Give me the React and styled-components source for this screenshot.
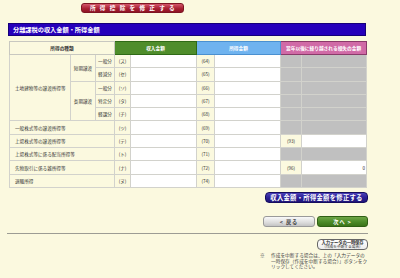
import React from "react";
import styled, { createGlobalStyle } from "styled-components";

const Global = createGlobalStyle`
  html, body { margin: 0; padding: 0; background: #fbf9df; }
  body { font-family: "Noto Sans CJK JP", "Noto Sans", sans-serif; }
`;

const Page = styled.div`
  width: 400px;
  height: 278px;
  box-sizing: border-box;
  padding: 3px 0 0 8px;
  background: #fbf9df;
  overflow: hidden;
`;

const Content = styled.div`
  width: 360px;
  display: flex;
  flex-direction: column;
`;

const TopRow = styled.div`
  display: flex;
  padding-left: 73px;
`;

const RedButton = styled.button`
  width: 103px;
  height: 10px;
  box-sizing: border-box;
  border-radius: 3px;
  border: 1px solid #7d1622;
  background: linear-gradient(#d3566a, #a61e30 60%, #8f1626);
  color: #fff;
  font-family: inherit;
  font-size: 5.6px;
  font-weight: bold;
  letter-spacing: 4.3px;
  padding: 0 0 0 4px;
  display: flex;
  align-items: center;
  justify-content: center;
  line-height: 8px;
`;

const TitleBar = styled.h2`
  margin: 10px 0 0;
  width: 358px;
  height: 13px;
  box-sizing: border-box;
  background: #2600bb;
  border: 1px solid #16007a;
  color: #fff;
  font-size: 6.2px;
  font-weight: bold;
  line-height: 11px;
  padding-left: 4px;
`;

const Table = styled.table`
  margin: 5px 0 0 1px;
  width: 357px;
  border-collapse: collapse;
  table-layout: fixed;
  font-size: 4.6px;
  color: #333;
`;

const headTones = {
  plain: { bg: "#fbf9df", border: "#c8c8c0", color: "#333" },
  green: { bg: "#4f8d2b", border: "#2f6a16", color: "#fff" },
  blue: { bg: "#6fb3ef", border: "#4a90d0", color: "#fff" },
  pink: { bg: "#d06aa6", border: "#8a3a6a", color: "#fff" },
};

const HeadRow = styled.tr`
  height: 13px;
`;

const Th = styled.th`
  padding: 0;
  text-align: center;
  font-weight: bold;
  font-size: 4.7px;
  line-height: 6px;
  background: ${(p) => headTones[p.$tone].bg};
  border: 1px solid ${(p) => headTones[p.$tone].border};
  color: ${(p) => headTones[p.$tone].color};
`;

const Row = styled.tr`
  height: 13.3px;
`;

const cellBg = {
  label: "#fbf9df",
  code: "#fbf9df",
  input: "#ffffff",
  gray: "#c0c0c0",
};

const Td = styled.td`
  padding: 0 ${(p) => (p.$align === "right" ? "1px" : "0")} 0
    ${(p) => (p.$align === "left" ? "5px" : "0")};
  text-align: ${(p) => p.$align || "center"};
  background: ${(p) => cellBg[p.$kind || "label"]};
  border: 1px solid #d2d2cc;
  line-height: 6px;
  white-space: nowrap;
  overflow: hidden;
`;

const Col = styled.col``;

const ActionRow = styled.div`
  display: flex;
  justify-content: flex-end;
  padding-right: ${(p) => p.$pr || 0}px;
  margin-top: ${(p) => p.$mt || 0}px;
  gap: 2px;
`;

const BlueButton = styled.button`
  width: 103px;
  height: 11px;
  box-sizing: border-box;
  border-radius: 4px;
  border: 1px solid #150d5e;
  background: linear-gradient(#4a3fb8, #2a1f94 55%, #1e1478);
  color: #fff;
  font-family: inherit;
  font-size: 6.3px;
  font-weight: bold;
  letter-spacing: 0.3px;
  padding: 0;
  line-height: 9px;
`;

const navTones = {
  back: {
    bg: "linear-gradient(#fafafa, #dcdcdc 60%, #c4c4c4)",
    border: "#9a9a9a",
    color: "#444",
    w: 52,
  },
  next: {
    bg: "linear-gradient(#6da645, #4c8a28 55%, #3b7419)",
    border: "#2f5f14",
    color: "#fff",
    w: 51,
  },
};

const NavButton = styled.button`
  width: ${(p) => navTones[p.$tone].w}px;
  height: 11px;
  box-sizing: border-box;
  border-radius: 3px;
  border: 1px solid ${(p) => navTones[p.$tone].border};
  background: ${(p) => navTones[p.$tone].bg};
  color: ${(p) => navTones[p.$tone].color};
  font-family: inherit;
  font-size: 5.2px;
  font-weight: bold;
  letter-spacing: 1px;
  padding: 0;
  line-height: 9px;
`;

const Divider = styled.div`
  height: 1px;
  width: 361px;
  margin: 6px 0 0 -1px;
  background: #9c9c94;
`;

const SaveButton = styled.button`
  width: 51px;
  height: 11px;
  box-sizing: border-box;
  border-radius: 4px;
  border: 1px solid #666;
  background: linear-gradient(#ffffff, #ececec);
  color: #333;
  font-family: inherit;
  padding: 0;
  display: flex;
  flex-direction: column;
  align-items: center;
  justify-content: center;
  overflow: hidden;
`;

const SaveMain = styled.span`
  font-size: 4.3px;
  line-height: 4.6px;
  font-weight: bold;
  letter-spacing: -0.1px;
  white-space: nowrap;
`;

const SaveSub = styled.span`
  font-size: 3.7px;
  line-height: 3.9px;
  white-space: nowrap;
`;

const Note = styled.div`
  align-self: flex-end;
  display: flex;
  width: 108px;
  margin-top: 3px;
  font-size: 4.7px;
  line-height: 5.6px;
  color: #444;
`;

const NoteMark = styled.span`
  width: 11px;
  flex: none;
`;

const NoteText = styled.span`
  flex: 1;
`;

const rows = [
  { code: "(ス)", num: "(64)" },
  { code: "(セ)", num: "(65)" },
  { code: "(ソ)", num: "(66)" },
  { code: "(タ)", num: "(67)" },
  { code: "(チ)", num: "(68)" },
];

const simpleRows = [
  { label: "一般株式等の譲渡所得等", code: "(ツ)", num: "(69)" },
  { label: "上場株式等の譲渡所得等", code: "(テ)", num: "(70)", loss: "(93)" },
  { label: "上場株式等に係る配当所得等", code: "(ト)", num: "(71)" },
  { label: "先物取引に係る雑所得等", code: "(ナ)", num: "(72)", loss: "(96)", value: "0" },
  { label: "退職所得", code: "(ヌ)", num: "(74)" },
];

function Tail({ code, num, loss, value }) {
  return (
    <>
      <Td $kind="code">{code}</Td>
      <Td $kind="input" />
      <Td $kind="code">{num}</Td>
      <Td $kind="input" />
      {loss ? (
        <>
          <Td $kind="code">{loss}</Td>
          <Td $kind="input" $align="right">{value}</Td>
        </>
      ) : (
        <>
          <Td $kind="gray" />
          <Td $kind="gray" />
        </>
      )}
    </>
  );
}

export default function App() {
  return (
    <>
      <Global />
      <Page>
        <Content>
          <TopRow>
            <RedButton>所得控除を修正する</RedButton>
          </TopRow>
          <TitleBar>分離課税の収入金額・所得金額</TitleBar>
          <Table>
            <colgroup>
              <Col style={{ width: 61 }} />
              <Col style={{ width: 25 }} />
              <Col style={{ width: 19 }} />
              <Col style={{ width: 16 }} />
              <Col style={{ width: 66 }} />
              <Col style={{ width: 18 }} />
              <Col style={{ width: 66 }} />
              <Col style={{ width: 21 }} />
              <Col style={{ width: 65 }} />
            </colgroup>
            <thead>
              <HeadRow>
                <Th colSpan={3} $tone="plain">所得の種類</Th>
                <Th colSpan={2} $tone="green">収入金額</Th>
                <Th colSpan={2} $tone="blue">所得金額</Th>
                <Th colSpan={2} $tone="pink">翌年以後に繰り越される損失の金額</Th>
              </HeadRow>
            </thead>
            <tbody>
              <Row>
                <Td rowSpan={5} $align="left">土地建物等の譲渡所得等</Td>
                <Td rowSpan={2}>短期譲渡</Td>
                <Td>一般分</Td>
                <Tail {...rows[0]} />
              </Row>
              <Row>
                <Td>軽減分</Td>
                <Tail {...rows[1]} />
              </Row>
              <Row>
                <Td rowSpan={3}>長期譲渡</Td>
                <Td>一般分</Td>
                <Tail {...rows[2]} />
              </Row>
              <Row>
                <Td>特定分</Td>
                <Tail {...rows[3]} />
              </Row>
              <Row>
                <Td>軽課分</Td>
                <Tail {...rows[4]} />
              </Row>
              {simpleRows.map((r) => (
                <Row key={r.code}>
                  <Td colSpan={3} $align="left">{r.label}</Td>
                  <Tail {...r} />
                </Row>
              ))}
            </tbody>
          </Table>
          <ActionRow $mt={4} $pr={0}>
            <BlueButton>収入金額・所得金額を修正する</BlueButton>
          </ActionRow>
          <ActionRow $mt={13} $pr={0}>
            <NavButton $tone="back">&lt; 戻る</NavButton>
            <NavButton $tone="next">次へ &gt;</NavButton>
          </ActionRow>
          <Divider />
          <ActionRow $mt={5}>
            <SaveButton>
              <SaveMain>入力データの一時保存</SaveMain>
              <SaveSub>（作成を中断する場合）</SaveSub>
            </SaveButton>
          </ActionRow>
          <Note>
            <NoteMark>※</NoteMark>
            <NoteText>
              作成を中断する場合は、上の「入力データの一時保存（作成を中断する場合）」ボタンをクリックしてください。
            </NoteText>
          </Note>
        </Content>
      </Page>
    </>
  );
}
